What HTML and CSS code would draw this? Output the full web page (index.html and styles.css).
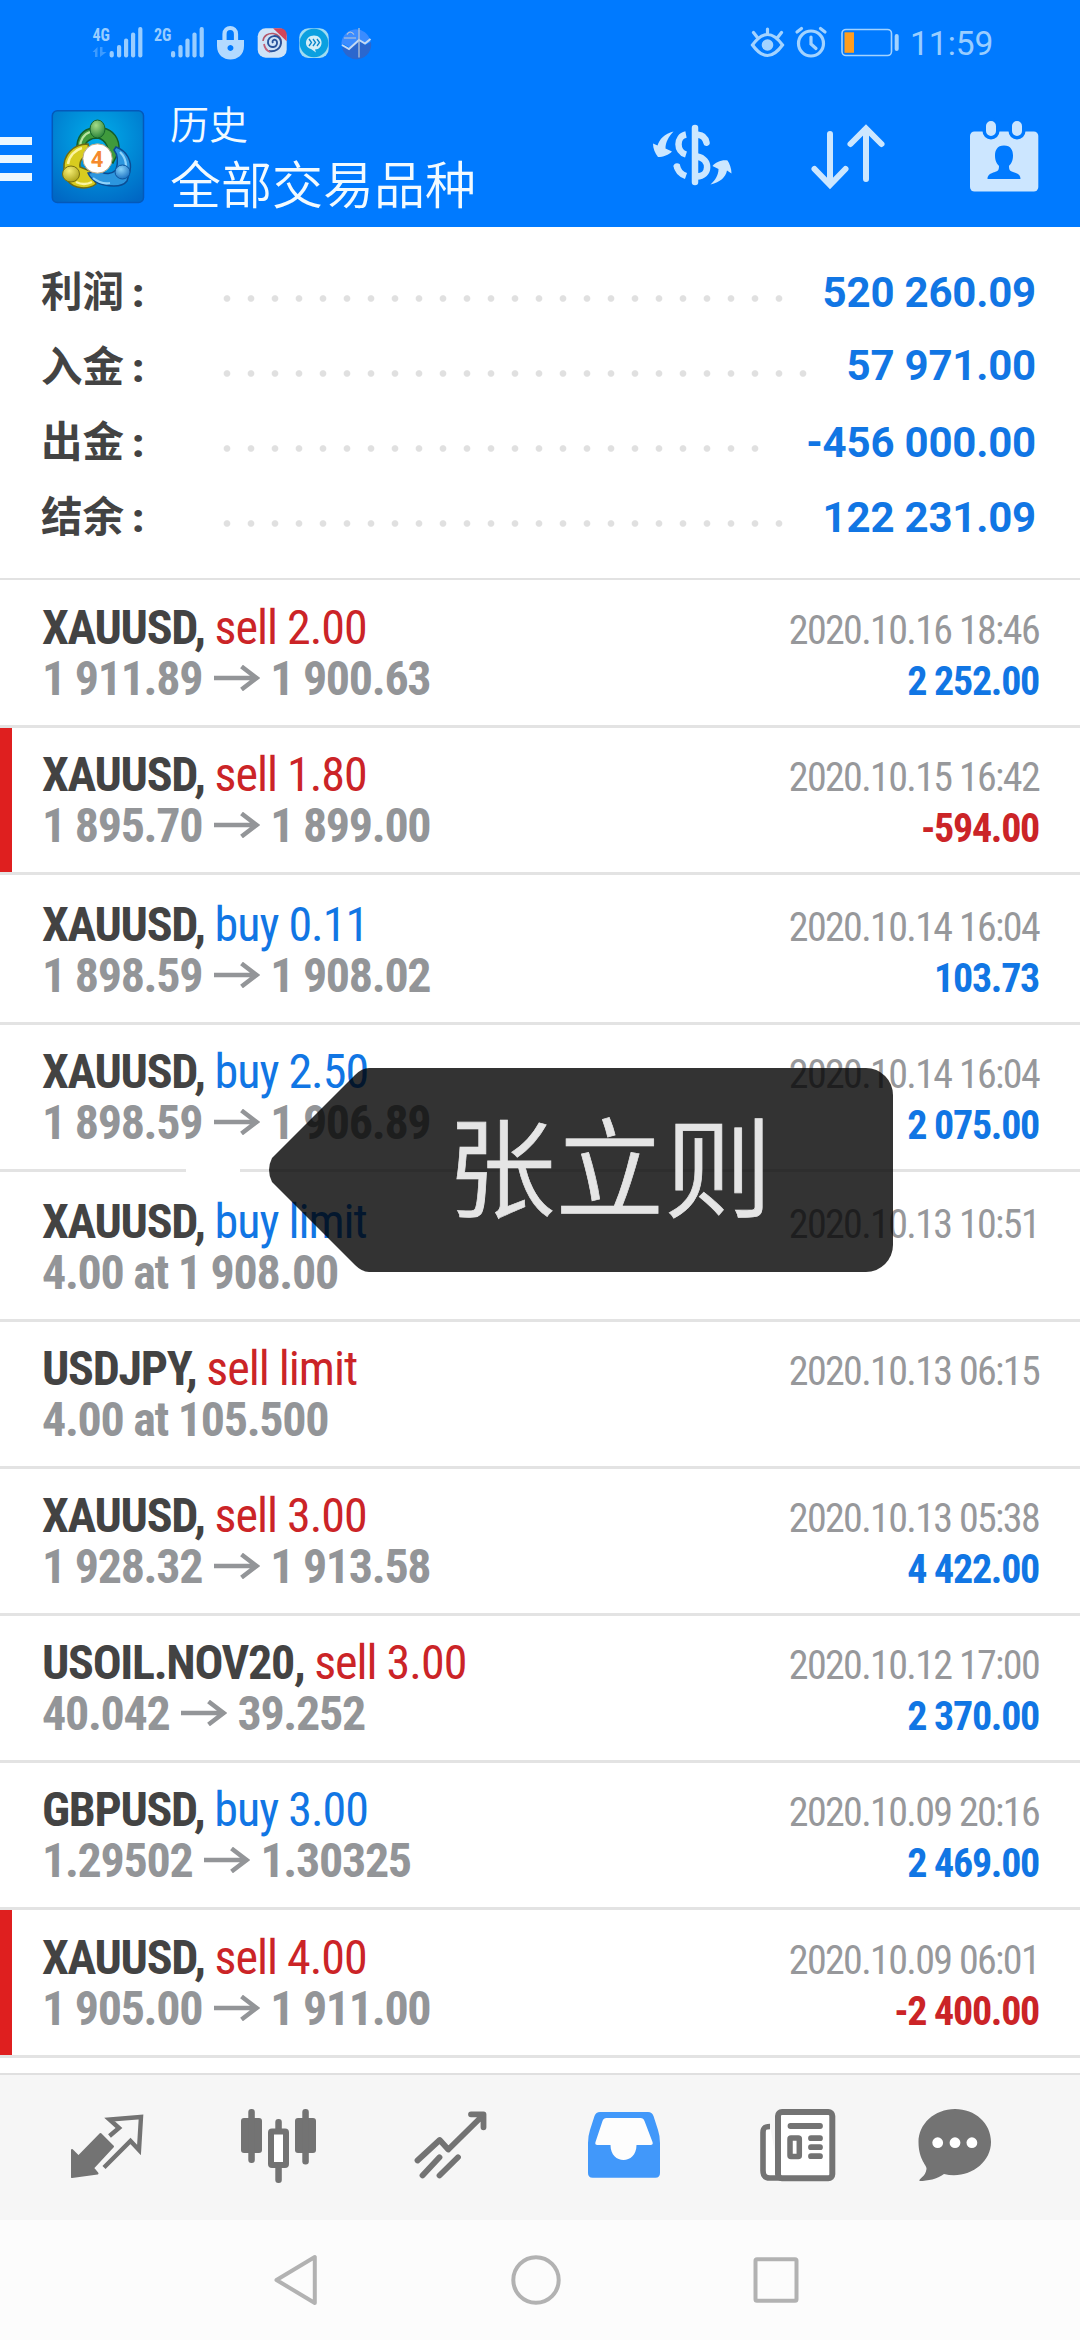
FILE: index.html
```
<!DOCTYPE html>
<html lang="zh-CN">
<head>
<meta charset="utf-8">
<title>历史</title>
<link rel="stylesheet" href="styles.css">
</head>
<body>
<div class="screen">
  <header class="header">
    <div class="status">
      <svg class="status-left" viewBox="84 16 300 56" width="300" height="56">
        <g fill="#99cdff">
          <text class="net" x="92.5" y="40.5" textLength="17.5" lengthAdjust="spacingAndGlyphs">4G</text>
          <text class="net" x="154" y="40.5" textLength="17.5" lengthAdjust="spacingAndGlyphs">2G</text>
          <path opacity=".4" d="M92.500 52l5-5v10h-2.500v-5zM100 47h2.500v5h4l-6.500 5z"/>
          <g id="bars"><rect x="109.600" y="51" width="4.200" height="6.500" rx="2"/><rect x="117" y="45" width="4.200" height="12.500" rx="2"/><rect x="124" y="38.500" width="4.200" height="19" rx="2"/><rect x="131" y="32.500" width="4.200" height="25" rx="2"/><rect x="138.200" y="27" width="4.200" height="30.500" rx="2"/></g>
          <use href="#bars" x="61.400"/>
        </g>
        <path fill="none" stroke="#b3daff" stroke-width="4.200" d="M224.500 42v-8c0-8 11.500-8 11.500 0v8"/>
        <path fill="#b3daff" fill-rule="evenodd" d="M217 40h27v6c0 18-27 18-27 0zM230.400 45a3 3 0 1 0 .1 0z"/>
        <rect x="257.700" y="28.300" width="29" height="29.400" rx="8" fill="#cfe3f7"/>
        <path fill="#d2455a" d="M273 28.300h8q5.700 1 5.700 7v6z"/>
        <path fill="none" stroke="#b4566a" stroke-width="1.500" d="M263 41c1-11 20-10 18 3"/>
        <path fill="none" stroke="#28539b" stroke-width="1.900" d="M273 43c-2-3 3-5 4-1 1 6-8 7-9 1-1-8 12-10 13-1 0 7-6 10-12 9"/>
        <path fill="none" stroke="#c0607a" stroke-width="1.800" d="M264 44q1 6 6 8"/>
        <rect x="299.300" y="28.300" width="29.400" height="29.700" rx="9" fill="#9fdcf2"/>
        <circle cx="314" cy="43" r="14.300" fill="#0ba0e0"/>
        <path fill="#d3eef8" d="M314 35.500c10 0 10 14 1 14l1 3-5-3.500c-8-2-6-13.500 3-13.500z"/>
        <path fill="none" stroke="#0b86c9" stroke-width="1.300" d="M309 39l2.500 3.500-2.500 3.500M313 39l2.500 3.500-2.500 3.500M317 39l2.500 3.500-2.500 3.500"/>
        <path fill="#3b8cff" d="M341.500 46a14.500 14.500 0 0 1 29-4l-4 2-7-5-9 9-7-4z"/>
        <path fill="#2b67ce" d="M342 47l8 2 9-8 7 4 5-3a14.700 14.700 0 0 1-29 5z"/>
        <path fill="none" stroke="#c4d9f3" stroke-width="2" d="M342 45l7 4 10-9 6 3.500 5.500-4.500"/>
        <path fill="none" stroke="#bfc8d4" stroke-width="1.200" d="M359 28v29.500M344 38h12M347 34.500q3-5 7 0"/>
      </svg>
      <svg class="status-right" viewBox="745 16 155 56" width="155" height="56" fill="none" stroke="#a3d3ff" stroke-width="3.200" stroke-linecap="round">
        <path d="M752.500 45q15-21 30 0-15 21-30 0zM767.500 34v-5M757 37l-3.500-4.500M778 37l3.500-4.500"/><circle cx="767.500" cy="45" r="5.800" fill="#a3d3ff" stroke="none"/>
        <circle cx="811" cy="43.500" r="12.500"/><path d="M797 32l4.500-3.500M825 32l-4.500-3.500M811 37v7l5 4.500"/>
        <rect x="842" y="29.500" width="49.500" height="26" rx="4" stroke-width="1.600"/><rect x="844.500" y="32.300" width="9.500" height="20.500" fill="#ff9d1e" stroke="none"/><rect x="894.700" y="34" width="4" height="17" rx="2" fill="#a3d3ff" stroke="none"/>
      </svg>
      <span class="clock">11:59</span>
    </div>
    <div class="toolbar">
      <div class="burger"><i></i><i></i><i></i></div>
      <svg class="logo" viewBox="51 109 94 95" width="94" height="95">
        <defs>
          <radialGradient id="sky" cx=".5" cy=".3" r=".8"><stop offset="0" stop-color="#00aeea"/><stop offset="1" stop-color="#0067c4"/></radialGradient>
          <radialGradient id="gr" cx=".4" cy=".3" r=".8"><stop offset="0" stop-color="#a5dc88"/><stop offset="1" stop-color="#1c7a30"/></radialGradient>
          <radialGradient id="ye" cx=".4" cy=".3" r=".8"><stop offset="0" stop-color="#f6ee75"/><stop offset="1" stop-color="#a49a10"/></radialGradient>
          <radialGradient id="bl" cx=".4" cy=".3" r=".8"><stop offset="0" stop-color="#8ad4fa"/><stop offset="1" stop-color="#0e66bc"/></radialGradient>
        </defs>
        <rect x="52.300" y="110.700" width="91.200" height="91.800" rx="5" fill="url(#sky)" stroke="#0459ba" stroke-width="1.500"/>
        <path fill="#3f9a3c" stroke="#135d2a" stroke-width="1.500" d="M77 150c-1-13 6-21 16-22h10c10 2 17 10 16 23l-6 12-5-3c2-12-2-20-10-22-8 0-13 4-13 9z"/>
        <path fill="none" stroke="#b6e4a1" stroke-width="2.200" d="M80 147c0-7 4-13 10-15"/>
        <path fill="#d8cc1f" stroke="#6e6b12" stroke-width="1.500" d="M88 144c-15 0-25 11-24 25l4 12c6 8 20 9 28 3l-6-13-10-4c-1-7 4-12 10-12z"/>
        <path fill="none" stroke="#fbf5a0" stroke-width="2.500" d="M68 164c1-8 7-14 14-16M76 182q8 4 16 0"/>
        <path fill="#2c96de" stroke="#0b4c93" stroke-width="1.500" d="M116 147c11 4 16 14 14 24l-3 10c-3 4-8 5-13 5-12 0-22-4-26-13l12-2c5 4 12 3 16-1 2-7 2-15-2-20z"/>
        <path fill="none" stroke="#8fd3fa" stroke-width="2.200" d="M120 152c4 4 6 9 6 14M93 178c5 4 11 6 17 5"/>
        <circle cx="97.500" cy="158.500" r="14.700" fill="#fff" stroke="#b8a883"/>
        <ellipse cx="97.500" cy="129" rx="7.500" ry="9" fill="url(#gr)" stroke="#17642c"/>
        <ellipse cx="71" cy="174" rx="8.500" ry="8" fill="url(#ye)" stroke="#77700f"/>
        <ellipse cx="122.500" cy="172" rx="7.500" ry="7" fill="url(#bl)" stroke="#0d559e"/>
        <text class="four" x="97" y="167" text-anchor="middle">4</text>
      </svg>
      <div class="titles"><div class="title">历史</div><div class="subtitle">全部交易品种</div></div>
      <svg class="actions" viewBox="640 107 410 96" width="410" height="96" fill="none" stroke="#cce7ff" stroke-width="6.500" stroke-linecap="round">
        <path d="M695 128v54"/>
        <path stroke-linecap="butt" d="M686 134.500c-10 2-10 17 0 20M686 176c-6-2-8.500-5.500-9.500-11"/><path d="M677 166.500v.1M698 134.700q7 .5 8.500 8"/><path stroke-linecap="butt" d="M697 156.500c14 2.500 13 20 0 20"/>
        <path fill="#cce7ff" stroke="none" d="M673.500 131.500c-9 2.500-14 7.500-16 14l-4.500-2c0 5 2 10 5 13.500 5 0 11-2 14-5.500l-6.500-3c0-6 3-12 8-17zM710.500 184.500c10-2.500 15-7 16.500-14l4.500 3c0-5-2-10-4-13-6-1-12 2-15 5.500l6 3c0 6-3 11-8 15.500z"/>
        <path stroke-width="6" d="M830 134v50M814.500 169l15.500 16 15.500-16M866 179v-50M850.500 144l15.500-15.500L881.500 144"/>
        <rect x="970" y="131.500" width="68.300" height="60" rx="4.500" fill="#cce6ff" stroke="none"/>
        <path d="M991 126v5M1017 126v5" stroke="#007aff" stroke-width="17"/><path d="M991 126v5M1017 126v5" stroke="#cce6ff" stroke-width="10"/>
        <path fill="#007aff" stroke="none" d="M1004 145.500c7 0 9 5 9 10 0 6-2 8-4 10.500 0 4 1 5 4 6 5 1.500 7.500 3 7.500 7h-33c0-4 2.500-5.500 7.500-7 3-1 4-2 4-6-2-2.500-4-4.500-4-10.500 0-5 2-10 9-10z"/>
      </svg>
    </div>
  </header>

  <section class="summary">
    <div class="sum-row"><span class="label">利润<b>:</b></span><span class="dots"></span><span class="amount">520 260.09</span></div>
    <div class="sum-row"><span class="label">入金<b>:</b></span><span class="dots"></span><span class="amount amount-up">57 971.00</span></div>
    <div class="sum-row"><span class="label">出金<b>:</b></span><span class="dots"></span><span class="amount">-456 000.00</span></div>
    <div class="sum-row"><span class="label">结余<b>:</b></span><span class="dots"></span><span class="amount">122 231.09</span></div>
  </section>

  <main class="deals">
    <svg width="0" height="0" class="defs"><symbol id="arrow" viewBox="0 0 46 26"><path fill="none" stroke="#939598" stroke-width="4.500" d="M0 13h42M27.500 1.500L42.500 13 27.500 24.500"/></symbol></svg>
    <div class="deal tall"><div class="name">XAUUSD, <span class="sell">sell 2.00</span></div><div class="date">2020.10.16 18:46</div><div class="price">1 911.89<svg class="to"><use href="#arrow"/></svg>1 900.63</div><div class="profit">2 252.00</div></div>
    <div class="deal loss"><div class="name">XAUUSD, <span class="sell">sell 1.80</span></div><div class="date">2020.10.15 16:42</div><div class="price">1 895.70<svg class="to"><use href="#arrow"/></svg>1 899.00</div><div class="profit">-594.00</div></div>
    <div class="deal taller"><div class="name">XAUUSD, <span class="buy">buy 0.11</span></div><div class="date">2020.10.14 16:04</div><div class="price">1 898.59<svg class="to"><use href="#arrow"/></svg>1 908.02</div><div class="profit">103.73</div></div>
    <div class="deal"><div class="name">XAUUSD, <span class="buy">buy 2.50</span></div><div class="date">2020.10.14 16:04</div><div class="price">1 898.59<svg class="to"><use href="#arrow"/></svg>1 906.89</div><div class="profit">2 075.00</div></div>
    <div class="deal taller"><div class="name">XAUUSD, <span class="buy">buy limit</span></div><div class="date">2020.10.13 10:51</div><div class="price">4.00 at 1 908.00</div></div>
    <div class="deal"><div class="name">USDJPY, <span class="sell">sell limit</span></div><div class="date">2020.10.13 06:15</div><div class="price">4.00 at 105.500</div></div>
    <div class="deal"><div class="name">XAUUSD, <span class="sell">sell 3.00</span></div><div class="date">2020.10.13 05:38</div><div class="price">1 928.32<svg class="to"><use href="#arrow"/></svg>1 913.58</div><div class="profit">4 422.00</div></div>
    <div class="deal"><div class="name">USOIL.NOV20, <span class="sell">sell 3.00</span></div><div class="date">2020.10.12 17:00</div><div class="price">40.042<svg class="to"><use href="#arrow"/></svg>39.252</div><div class="profit">2 370.00</div></div>
    <div class="deal"><div class="name">GBPUSD, <span class="buy">buy 3.00</span></div><div class="date">2020.10.09 20:16</div><div class="price">1.29502<svg class="to"><use href="#arrow"/></svg>1.30325</div><div class="profit">2 469.00</div></div>
    <div class="deal tall loss"><div class="name">XAUUSD, <span class="sell">sell 4.00</span></div><div class="date">2020.10.09 06:01</div><div class="price">1 905.00<svg class="to"><use href="#arrow"/></svg>1 911.00</div><div class="profit">-2 400.00</div></div>
  </main>

  <nav class="tabs">
    <svg viewBox="0 2075 1080 145" width="1080" height="145" fill="none" stroke="#737373">
      <path fill="#737373" stroke="#737373" stroke-width="2" stroke-linejoin="round" d="M72 2150l6.500 6.500 22-22.500 12.500 12.500-20 21.500 4.500 5.500L72 2177z"/>
      <path stroke-width="4.400" d="M109.500 2136l9.500-8-9.500-8.500 31.500-2.500-2 33-8.500-9-26.500 26.500"/>
      <g fill="#737373" stroke="none"><rect x="241" y="2118" width="21" height="35" rx="3"/><rect x="248.300" y="2109" width="6.500" height="54" rx="3"/><rect x="295" y="2118" width="21" height="35" rx="3"/><rect x="302.300" y="2109" width="6.500" height="55.500" rx="3"/><rect x="275.300" y="2119" width="6.500" height="64" rx="3"/></g>
      <rect x="271" y="2131.500" width="15" height="33.500" rx="1" stroke-width="6" fill="#fff"/>
      <path stroke-width="5.800" stroke-linecap="round" stroke-linejoin="round" d="M417.500 2160.500l22.200-20.500 8.600 9.500 35-34.500M471 2114.300h12.500v13M439.500 2157.300l-17 18.200M458 2157.300l-18.500 18.200"/>
      <path fill="#4198fa" stroke="none" d="M600 2112h48q4 0 5.500 4l4.500 14q2 6 2 13v30q0 4.700-4.700 4.700H592.700q-4.700 0-4.700-4.700v-30q0-7 2-13l4.500-14q1.500-4 5.500-4z"/>
      <path fill="#fdfdfd" stroke="none" d="M606.500 2118h34q3 0 4 3l8 21q1 3-2 3h-14c0 20-26 20-26 0h-13q-3 0-2-3l7-21q1-3 4-3z"/>
      <path stroke-width="5.600" fill="#fff" d="M770 2126.500c-5 0-7 1-7 6v38c0 5 2 7.500 7 7.500h10"/>
      <rect x="778" y="2112" width="54.300" height="66.200" rx="4" stroke-width="6" fill="#fff"/>
      <path stroke-width="5.800" stroke-linecap="round" d="M790.500 2126h29.500M811 2138.200h9M811 2147.200h9M811 2156.200h9"/><rect x="790" y="2138" width="9.300" height="18.500" rx="1" stroke-width="5.500"/>
      <path fill="#737373" stroke="none" d="M955 2109c20 0 36 14 36 33 0 22-24 38-47 32-7 5-16 7-24.500 7-1-2.500 6-4 7-12 1-3-8-9-8-27 0-18 16-33 36.500-33z"/><g fill="#fff" stroke="none"><circle cx="937.700" cy="2142.700" r="5.400"/><circle cx="955" cy="2142.700" r="5.400"/><circle cx="971.900" cy="2142.700" r="5.400"/></g>
    </svg>
  </nav>
  <footer class="sysnav">
    <svg viewBox="0 2220 1080 120" width="1080" height="120" fill="none" stroke="#b2b2b2" stroke-width="4" stroke-linejoin="round"><path d="M276.500 2280l38.300-23v46z"/><circle cx="536" cy="2280" r="22.700"/><rect x="755.500" y="2259.300" width="41" height="41.500" rx="1.500"/></svg>
  </footer>

  <div class="eraser"></div>
  <div class="callout">
    <svg viewBox="0 0 624 204" width="624" height="204"><path fill="#000" fill-opacity=".8" d="M100 0H597a27 27 0 0 1 27 27V177a27 27 0 0 1-27 27H100Q93 204 86 197L3 114Q-3 102 3 90L86 7Q93 0 100 0z"/></svg>
    <span class="callout-name">张立则</span>
  </div>
</div>
</body>
</html>
```
FILE: styles.css
```
body {
  margin: 0;
  background: #fff;
  font-family: Roboto, "Noto Sans CJK SC", sans-serif;
}
svg { display: block; flex: none; }
.screen {
  position: relative;
  width: 1080px;
  height: 2340px;
  overflow: hidden;
  display: flex;
  flex-direction: column;
  background: #fff;
}
.header { height: 227px; background: #007aff; flex: none; }
.status { display: flex; height: 88px; align-items: flex-start; padding: 16px 0 0 84px; box-sizing: border-box; }
.status-right { margin-left: 361px; }
.net { font: 700 19px "Roboto Condensed", Roboto, sans-serif; }
.clock { margin-left: 10px; font-size: 33.500px; line-height: 56px; color: #99cdff; }
.toolbar { display: flex; height: 139px; align-items: flex-start; }
.burger { width: 32px; padding-top: 49px; display: grid; gap: 10px; }
.burger i { height: 8px; background: #ebf7ff; }
.logo { margin: 21px 0 0 19px; }
.four { font: 700 22px Roboto, sans-serif; fill: #f58a2c; }
.titles { margin-left: 25px; width: 470px; color: #f2faff; font-family: "Noto Sans CJK SC", sans-serif; font-weight: 350; }
.title { font-size: 39px; line-height: 50px; padding-top: 9px; }
.subtitle { font-size: 51px; line-height: 60px; padding-top: 5px; }
.actions { margin-top: 19px; }

.summary { height: 323px; padding: 28px 44px 0 41px; border-bottom: 2px solid #e2e2e2; flex: none; }
.sum-row { display: flex; height: 75px; align-items: flex-start; }
.label { width: 174px; flex: none; font: 700 41.500px/68px "Noto Sans CJK SC", sans-serif; color: #434343; }
.label b { margin-left: 8px; font-family: Roboto, sans-serif; }
.dots { flex: 1; height: 7px; margin-top: 40px; background: radial-gradient(circle, #e0e0e0 0 2.800px, transparent 3.800px) 0 0 / 24px 7px repeat-x; }
.amount { margin-left: 36px; font-size: 42px; font-weight: 700; line-height: 76px; letter-spacing: -.2px; color: #1176e4; }
.amount-up { margin-top: -2px; }

.defs { position: absolute; }
.deal {
  display: grid;
  grid-template-columns: 1fr auto;
  grid-auto-rows: 51px;
  align-items: baseline;
  height: 147px;
  box-sizing: border-box;
  padding: 21px 41px 0 42px;
  border-bottom: 3px solid #e3e3e3;
  font-family: "Roboto Condensed", Roboto, sans-serif;
  line-height: 51px;
  white-space: nowrap;
}
.tall { height: 148px; padding-top: 22px; }
.taller { height: 150px; padding-top: 24px; }
.loss { background: linear-gradient(#df1f1f, #df1f1f) 0 0 / 12px 100% no-repeat; }
.name { font-size: 48px; font-weight: 700; letter-spacing: -1.300px; color: #434343; }
.name span { font-weight: 400; letter-spacing: -1px; }
.name .sell { color: #cb2427; }
.name .buy { color: #1176e4; }
.price { font-size: 48px; font-weight: 700; letter-spacing: -1.300px; color: #939598; }
.to { display: inline-block; width: 46px; height: 26px; margin: 0 10px 0 12px; vertical-align: 4px; }
.date { font-size: 40px; letter-spacing: -1.650px; color: #97989b; text-align: right; }
.profit { font-size: 40px; font-weight: 700; letter-spacing: -1.300px; color: #1176e4; text-align: right; }
.loss .profit { color: #cb2427; }

.tabs { margin-top: 15px; border-top: 2px solid #e0e0e0; height: 145px; background: #f6f6f6; flex: none; }
.sysnav { height: 120px; background: #fcfcfc; flex: none; }

.eraser { position: absolute; left: 186px; top: 1164px; width: 54px; height: 12px; background: #fff; }
.callout { position: absolute; left: 269px; top: 1068px; width: 624px; height: 204px; }
.callout-name { position: absolute; left: 178px; top: -6px; font: 350 108.500px/200px "Noto Sans CJK SC", sans-serif; color: #e5e5e5; -webkit-text-stroke: .7px #e5e5e5; white-space: nowrap; }
```
